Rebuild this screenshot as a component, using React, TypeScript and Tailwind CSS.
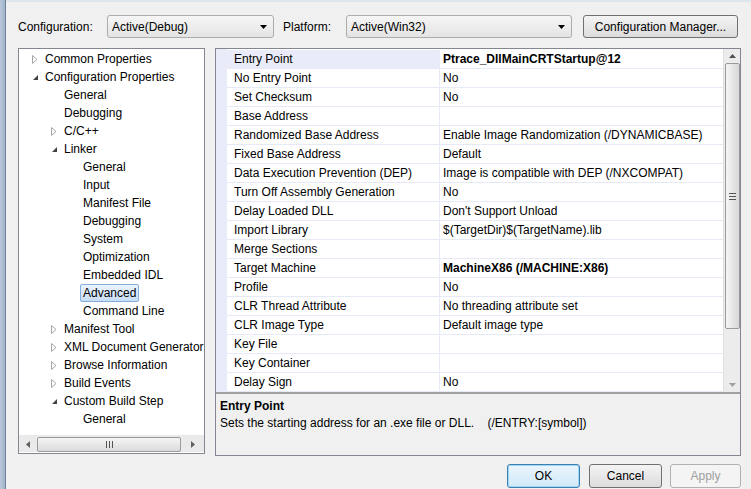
import React from "react";

type TreeItem = {
  label: string;
  level: number;
  state?: "open" | "closed";
  selected?: boolean;
};

const tree: TreeItem[] = [
  { label: "Common Properties", level: 0, state: "closed" },
  { label: "Configuration Properties", level: 0, state: "open" },
  { label: "General", level: 1 },
  { label: "Debugging", level: 1 },
  { label: "C/C++", level: 1, state: "closed" },
  { label: "Linker", level: 1, state: "open" },
  { label: "General", level: 2 },
  { label: "Input", level: 2 },
  { label: "Manifest File", level: 2 },
  { label: "Debugging", level: 2 },
  { label: "System", level: 2 },
  { label: "Optimization", level: 2 },
  { label: "Embedded IDL", level: 2 },
  { label: "Advanced", level: 2, selected: true },
  { label: "Command Line", level: 2 },
  { label: "Manifest Tool", level: 1, state: "closed" },
  { label: "XML Document Generator", level: 1, state: "closed" },
  { label: "Browse Information", level: 1, state: "closed" },
  { label: "Build Events", level: 1, state: "closed" },
  { label: "Custom Build Step", level: 1, state: "open" },
  { label: "General", level: 2 },
];

const props: { name: string; value: string; bold?: boolean }[] = [
  { name: "Entry Point", value: "Ptrace_DllMainCRTStartup@12", bold: true },
  { name: "No Entry Point", value: "No" },
  { name: "Set Checksum", value: "No" },
  { name: "Base Address", value: "" },
  { name: "Randomized Base Address", value: "Enable Image Randomization (/DYNAMICBASE)" },
  { name: "Fixed Base Address", value: "Default" },
  { name: "Data Execution Prevention (DEP)", value: "Image is compatible with DEP (/NXCOMPAT)" },
  { name: "Turn Off Assembly Generation", value: "No" },
  { name: "Delay Loaded DLL", value: "Don't Support Unload" },
  { name: "Import Library", value: "$(TargetDir)$(TargetName).lib" },
  { name: "Merge Sections", value: "" },
  { name: "Target Machine", value: "MachineX86 (/MACHINE:X86)", bold: true },
  { name: "Profile", value: "No" },
  { name: "CLR Thread Attribute", value: "No threading attribute set" },
  { name: "CLR Image Type", value: "Default image type" },
  { name: "Key File", value: "" },
  { name: "Key Container", value: "" },
  { name: "Delay Sign", value: "No" },
];

const indent = ["pl-[13px]", "pl-[32px]", "pl-[51px]"];

function Expander({ state }: { state?: "open" | "closed" }) {
  if (!state) return <span className="w-[13px] shrink-0" />;
  return (
    <span className="w-[13px] shrink-0 flex items-center justify-start">
      {state === "closed" ? (
        <svg width="6" height="9" viewBox="0 0 6 9">
          <path d="M0.5 0.5 L5 4.5 L0.5 8.5 Z" fill="white" stroke="#a6a6a6" />
        </svg>
      ) : (
        <svg width="7" height="7" viewBox="0 0 7 7">
          <path d="M6 1 L6 6 L1 6 Z" fill="#404040" />
        </svg>
      )}
    </span>
  );
}

function Combo({ text, w }: { text: string; w: string }) {
  return (
    <div
      className={`${w} h-[23px] flex items-center justify-between pl-[4px] pr-[6px] border border-[#acacac] rounded-[3px] bg-gradient-to-b from-[#f6f6f6] to-[#e4e4e4]`}
    >
      <span>{text}</span>
      <svg width="7" height="4" viewBox="0 0 7 4">
        <path d="M0 0 L7 0 L3.5 4 Z" fill="#000" />
      </svg>
    </div>
  );
}

export default function App() {
  return (
    <div className="w-[751px] h-[489px] flex bg-[#f0f0f0] text-[12px] text-black font-['Segoe_UI','Liberation_Sans',sans-serif] overflow-hidden">
      {/* window frame */}
      <div className="w-[6px] shrink-0 bg-gradient-to-r from-[#b9c9da] to-[#9fb3c8] border-r border-[#6f849b]" />
      <div className="flex-1 flex flex-col border-t-2 border-[#dfe6ee]">
        {/* top bar */}
        <div className="h-[23px] mt-[13px] flex items-center pl-[12px]">
          <span className="w-[89px]">Configuration:</span>
          <Combo text="Active(Debug)" w="w-[167px]" />
          <span className="ml-[9px] w-[63px]">Platform:</span>
          <Combo text="Active(Win32)" w="w-[226px]" />
          <button className="ml-[11px] w-[155px] h-[23px] border border-[#707070] rounded-[3px] bg-gradient-to-b from-[#f4f4f4] to-[#dcdcdc]">
            Configuration Manager...
          </button>
        </div>

        {/* main area */}
        <div className="flex mt-[10px] pl-[12px] h-[408px]">
          {/* tree */}
          <div className="w-[187px] h-[406px] shrink-0 border border-[#828790] bg-white flex flex-col">
            <div className="flex-1 pt-[1px] overflow-hidden">
              {tree.map((t, i) => (
                <div key={i} className={`h-[18px] flex items-center whitespace-nowrap ${indent[t.level]}`}>
                  <Expander state={t.state} />
                  {t.selected ? (
                    <span className="ml-[-3px] px-[2px] h-[18px] leading-[16px] border border-[#84acdd] rounded-[2px] bg-gradient-to-b from-[#eaf3fd] to-[#c7ddf6]">
                      {t.label}
                    </span>
                  ) : (
                    <span>{t.label}</span>
                  )}
                </div>
              ))}
            </div>
            {/* horizontal scrollbar */}
            <div className="h-[17px] mb-[1px] flex items-center bg-[#eaeaea] border-t border-[#e8e8e8]">
              <div className="w-[17px] flex justify-center">
                <svg width="4" height="7" viewBox="0 0 4 7">
                  <path d="M4 0 L0 3.5 L4 7 Z" fill="#606060" />
                </svg>
              </div>
              <div className="w-[144px] h-[15px] ml-[1px] border border-[#9a9a9a] rounded-[2px] bg-gradient-to-b from-[#f5f5f5] to-[#dadada] flex items-center justify-center">
                <svg width="7" height="7" viewBox="0 0 7 7">
                  <path d="M0.5 0 V7 M3.5 0 V7 M6.5 0 V7" stroke="#555" />
                </svg>
              </div>
              <div className="flex-1 flex justify-center">
                <svg width="4" height="7" viewBox="0 0 4 7">
                  <path d="M0 0 L4 3.5 L0 7 Z" fill="#606060" />
                </svg>
              </div>
            </div>
          </div>

          {/* property grid + description */}
          <div className="ml-[10px] w-[526px] h-[408px] border border-[#828790] flex flex-col">
            <div className="h-[343px] flex bg-white">
              <div className="flex-1 flex flex-col pt-[1px] bg-[linear-gradient(to_right,#e9ecf8_11px,white_11px)]">
                {props.map((p, i) => (
                  <div key={i} className="h-[19px] shrink-0 flex">
                    <div className="w-[11px] bg-[#e9ecf8]" />
                    <div
                      className={`w-[212px] pl-[7px] leading-[18px] border-b border-[#e6eaf6] whitespace-nowrap ${
                        i === 0 ? "bg-[#e9ecf8]" : ""
                      }`}
                    >
                      {p.name}
                    </div>
                    <div
                      className={`flex-1 pl-[3px] leading-[18px] border-b border-l border-[#e6eaf6] whitespace-nowrap ${
                        p.bold ? "font-bold" : ""
                      }`}
                    >
                      {p.value}
                    </div>
                  </div>
                ))}
              </div>
              {/* vertical scrollbar */}
              <div className="w-[17px] flex flex-col items-center bg-[#ececec] border-l border-[#e0e0e0]">
                <div className="h-[14px] flex items-center justify-center">
                  <svg width="7" height="4" viewBox="0 0 7 4">
                    <path d="M0 4 L3.5 0 L7 4 Z" fill="#505050" />
                  </svg>
                </div>
                <div className="w-[15px] h-[266px] border border-[#9a9a9a] rounded-[2px] bg-gradient-to-r from-[#f5f5f5] to-[#d8d8d8] flex items-center justify-center">
                  <svg width="7" height="7" viewBox="0 0 7 7">
                    <path d="M0 0.5 H7 M0 3.5 H7 M0 6.5 H7" stroke="#555" />
                  </svg>
                </div>
                <div className="flex-1" />
                <div className="h-[14px] flex items-center justify-center">
                  <svg width="7" height="4" viewBox="0 0 7 4">
                    <path d="M0 0 L7 0 L3.5 4 Z" fill="#a0a0a0" />
                  </svg>
                </div>
              </div>
            </div>
            <div className="border-t-2 border-[#a0a0a0] flex-1 px-[4px] pt-[4px] bg-[#f0f0f0]">
              <div className="font-bold leading-[17px]">Entry Point</div>
              <div className="leading-[17px]">
                Sets the starting address for an .exe file or DLL.{"\u00a0\u00a0\u00a0\u00a0"}(/ENTRY:[symbol])
              </div>
            </div>
          </div>
        </div>

        {/* buttons */}
        <div className="flex justify-end pr-[10px] mt-[8px]">
          <button className="w-[73px] h-[24px] border border-[#3c7fb1] rounded-[3px] bg-gradient-to-b from-[#eaf6fd] to-[#d2e8f8] shadow-[inset_0_0_0_1px_#9fd6f4]">
            OK
          </button>
          <button className="ml-[9px] w-[73px] h-[24px] border border-[#707070] rounded-[3px] bg-gradient-to-b from-[#f4f4f4] to-[#dcdcdc]">
            Cancel
          </button>
          <button className="ml-[8px] w-[71px] h-[24px] border border-[#adb2b5] rounded-[3px] bg-[#f4f4f4] text-[#a0a0a0]">
            Apply
          </button>
        </div>
      </div>
    </div>
  );
}
